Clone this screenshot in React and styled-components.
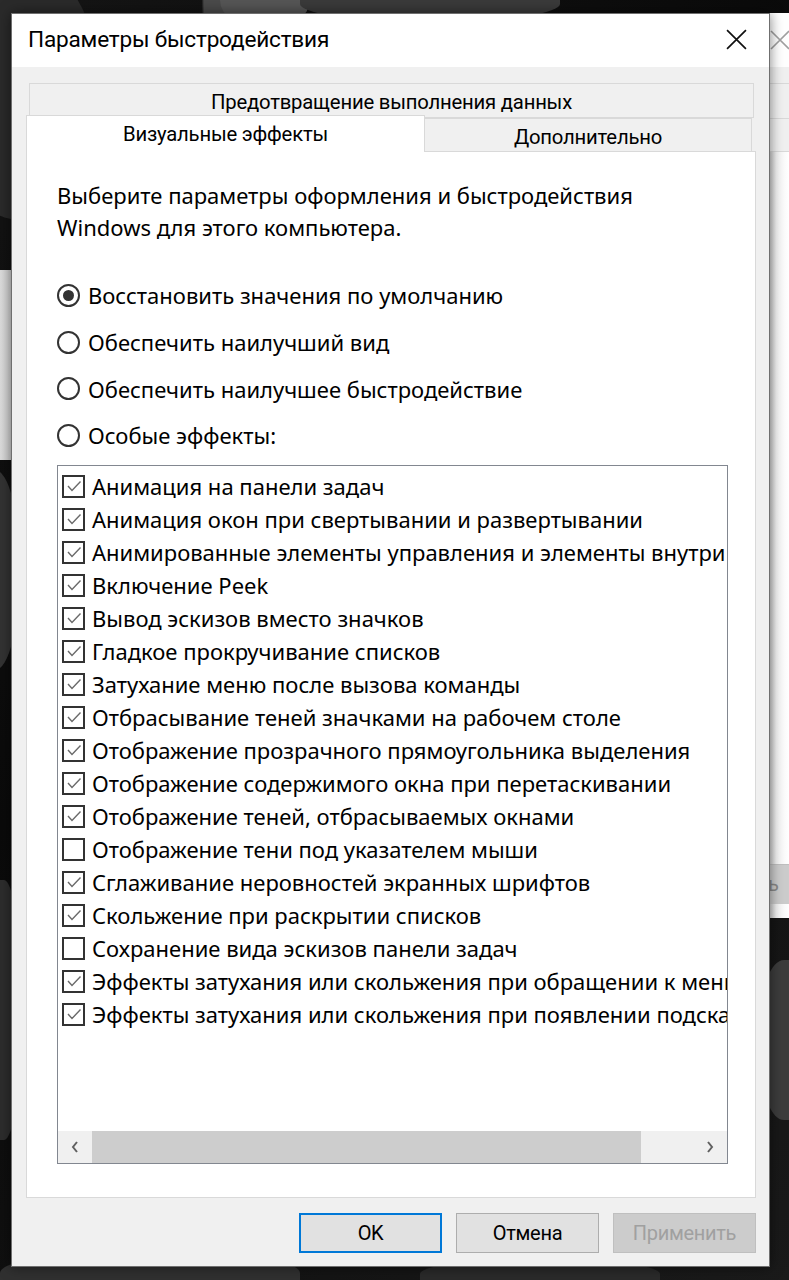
import styled, { createGlobalStyle } from "styled-components";
import { useState } from "react";

const GlobalStyle = createGlobalStyle`
  html, body {
    margin: 0;
    padding: 0;
    width: 789px;
    height: 1280px;
    overflow: hidden;
    background: #0c0c0c;
  }
  * {
    box-sizing: border-box;
  }
`;

const effects = [
  ["Анимация на панели задач", true],
  ["Анимация окон при свертывании и развертывании", true],
  ["Анимированные элементы управления и элементы внутри окна", true],
  ["Включение Peek", true],
  ["Вывод эскизов вместо значков", true],
  ["Гладкое прокручивание списков", true],
  ["Затухание меню после вызова команды", true],
  ["Отбрасывание теней значками на рабочем столе", true],
  ["Отображение прозрачного прямоугольника выделения", true],
  ["Отображение содержимого окна при перетаскивании", true],
  ["Отображение теней, отбрасываемых окнами", true],
  ["Отображение тени под указателем мыши", false],
  ["Сглаживание неровностей экранных шрифтов", true],
  ["Скольжение при раскрытии списков", true],
  ["Сохранение вида эскизов панели задач", false],
  ["Эффекты затухания или скольжения при обращении к меню", true],
  ["Эффекты затухания или скольжения при появлении подсказок", true],
];

const modes = [
  "Восстановить значения по умолчанию",
  "Обеспечить наилучший вид",
  "Обеспечить наилучшее быстродействие",
  "Особые эффекты:",
];

const App = () => {
  const [mode, setMode] = useState(0);
  const [checks, setChecks] = useState(effects.map((e) => e[1]));

  const toggle = (i) =>
    setChecks((prev) => prev.map((v, j) => (j === i ? !v : v)));

  return (
    <Desktop>
      <GlobalStyle />
      <Blob $l={-60} $t={-40} $w={160} $h={260} $c="#2a2a2a" $r="50%" />
      <Blob $l={220} $t={-30} $w={90} $h={60} $c="#555" $r="50%" />
      <Blob $l={300} $t={-20} $w={260} $h={40} $c="#3a3a3a" $r="40%" />
      <Blob $l={-30} $t={470} $w={50} $h={200} $c="#333" $r="50%" />
      <Blob $l={-20} $t={880} $w={40} $h={260} $c="#2d2d2d" $r="40%" />
      <Blob $l={0} $t={1255} $w={300} $h={60} $c="#303030" $r="30%" />
      <Blob $l={420} $t={1262} $w={240} $h={40} $c="#2a2a2a" $r="30%" />
      <Blob $l={760} $t={960} $w={60} $h={160} $c="#3c3c3c" $r="40%" />

      <SideWindow>
        <SideTitle>
          <XIcon size={20} color="#a0a0a0" />
        </SideTitle>
        <SideBody>
          <SideTabs />
          <SidePanel>
            <SideButton>ь</SideButton>
          </SidePanel>
        </SideBody>
      </SideWindow>

      <LeftWindow />

      <Dialog>
        <TitleBar>
          <Title>Параметры быстродействия</Title>
          <CloseButton aria-label="Закрыть">
            <XIcon size={21} color="#111" />
          </CloseButton>
        </TitleBar>

        <Body>
          <Tabs>
            <TabRow $m="0 2px -3px 4px">
              <Tab $grow $h="35px" $pt="3px">
                Предотвращение выполнения данных
              </Tab>
            </TabRow>
            <TabRow $m="0 4px -1px 0">
              <Tab $selected $w="399px" $h="37px">
                Визуальные эффекты
              </Tab>
              <Tab $grow $h="34px" $pt="4px">
                Дополнительно
              </Tab>
            </TabRow>
          </Tabs>

          <Panel>
            <Intro>
              Выберите параметры оформления и быстродействия
              <br />
              Windows для этого компьютера.
            </Intro>

            <RadioGroup>
              {modes.map((label, i) => (
                <RadioRow key={label} onClick={() => setMode(i)}>
                  <Radio $on={mode === i} />
                  <span>{label}</span>
                </RadioRow>
              ))}
            </RadioGroup>

            <ListBox>
              <Items>
                {effects.map(([label], i) => (
                  <Item key={label} onClick={() => toggle(i)}>
                    <CheckBox>
                      {checks[i] && (
                        <svg width="18" height="18" viewBox="0 0 18 18">
                          <polyline
                            points="3,9 7,13.5 15.5,4.5"
                            fill="none"
                            stroke="#6a6a6a"
                            strokeWidth="1.4"
                          />
                        </svg>
                      )}
                    </CheckBox>
                    <ItemText>{label}</ItemText>
                  </Item>
                ))}
              </Items>
              <HScroll>
                <Arrow>
                  <svg width="10" height="14" viewBox="0 0 10 14">
                    <polyline points="7,2 3,7 7,12" fill="none" stroke="#606060" strokeWidth="2" />
                  </svg>
                </Arrow>
                <Track>
                  <Thumb style={{ width: "549px" }} />
                </Track>
                <Arrow>
                  <svg width="10" height="14" viewBox="0 0 10 14">
                    <polyline points="3,2 7,7 3,12" fill="none" stroke="#606060" strokeWidth="2" />
                  </svg>
                </Arrow>
              </HScroll>
            </ListBox>
          </Panel>

          <Footer>
            <Button $primary>OK</Button>
            <Button>Отмена</Button>
            <Button disabled>Применить</Button>
          </Footer>
        </Body>
      </Dialog>
    </Desktop>
  );
};

export default App;

const XIcon = ({ size, color }) => (
  <svg width={size} height={size} viewBox="0 0 20 20">
    <path d="M1 1 L19 19 M19 1 L1 19" stroke={color} strokeWidth="1.6" fill="none" />
  </svg>
);

const uiFont = `"Noto Sans", "Open Sans", sans-serif`;
const narrowFont = `Roboto, "Liberation Sans", sans-serif`;

const Desktop = styled.div`
  position: relative;
  width: 789px;
  height: 1280px;
  overflow: hidden;
  background:
    radial-gradient(ellipse 120px 300px at 240px 0px, #4a4a4a 0%, #4a4a4a 30%, transparent 32%),
    linear-gradient(135deg, #151515 0%, #0a0a0a 40%, #1a1a1a 100%);
`;

const Blob = styled.div`
  position: absolute;
  left: ${(p) => p.$l}px;
  top: ${(p) => p.$t}px;
  width: ${(p) => p.$w}px;
  height: ${(p) => p.$h}px;
  background: ${(p) => p.$c};
  border-radius: ${(p) => p.$r};
`;

const SideWindow = styled.div`
  position: absolute;
  left: 768px;
  top: 13px;
  width: 300px;
  height: 905px;
  background: #f0f0f0;
  display: flex;
  flex-direction: column;
`;

const SideTitle = styled.div`
  height: 54px;
  background: #fff;
  padding: 17px 0 0 2px;
`;

const SideBody = styled.div`
  flex: 1;
  display: flex;
  flex-direction: column;
  padding-top: 16px;
`;

const SideTabs = styled.div`
  height: 69px;
  border-top: 1px solid #d9d9d9;
  border-bottom: 1px solid #d9d9d9;
  background: linear-gradient(#f0f0f0 0 34px, #d9d9d9 34px 35px, #f0f0f0 35px);
`;

const SidePanel = styled.div`
  flex: 1;
  background: linear-gradient(90deg, #c8c8c8 0, #f2f2f2 8px, #fff 20px);
  display: flex;
  flex-direction: column;
  justify-content: flex-end;
  padding-bottom: 12px;
`;

const SideButton = styled.div`
  height: 40px;
  margin-bottom: 2px;
  background: #cccccc;
  border-top: 1px solid #bfbfbf;
  color: #8a8a8a;
  font: 20px ${uiFont};
  line-height: 38px;
`;

const LeftWindow = styled.div`
  position: absolute;
  left: -10px;
  top: 270px;
  width: 22px;
  height: 190px;
  background: linear-gradient(90deg, #e8e8e8, #d0d0d0);
`;

const Dialog = styled.div`
  position: absolute;
  left: 11px;
  top: 13px;
  width: 759px;
  height: 1254px;
  border: 1px solid #6f6f6f;
  background: #f0f0f0;
  display: flex;
  flex-direction: column;
  box-shadow: 0 0 12px rgba(0, 0, 0, 0.5);
`;

const TitleBar = styled.div`
  height: 53px;
  background: #fff;
  display: flex;
  align-items: center;
  justify-content: space-between;
  padding: 0 0 2px 16px;
`;

const Title = styled.div`
  font-family: ${narrowFont};
  font-size: 22.6px;
  color: #000;
  letter-spacing: -0.2px;
`;

const CloseButton = styled.button`
  width: 66px;
  height: 53px;
  border: none;
  background: transparent;
  display: flex;
  align-items: center;
  justify-content: center;
  padding: 0;
  cursor: pointer;
`;

const Body = styled.div`
  flex: 1;
  display: flex;
  flex-direction: column;
  padding: 16px 13px 13px 14px;
`;

const Tabs = styled.div`
  display: flex;
  flex-direction: column;
`;

const TabRow = styled.div`
  display: flex;
  align-items: flex-end;
  margin: ${(p) => p.$m};
`;

const Tab = styled.div`
  ${(p) => (p.$grow ? "flex: 1;" : `width: ${p.$w};`)}
  height: ${(p) => p.$h};
  background: ${(p) => (p.$selected ? "#fff" : "#f0f0f0")};
  border: 1px solid #d9d9d9;
  border-bottom: ${(p) => (p.$selected ? "none" : "1px solid #d9d9d9")};
  margin-left: ${(p) => (p.$selected ? "0" : "-1px")};
  position: relative;
  z-index: ${(p) => (p.$selected ? 2 : 1)};
  display: flex;
  align-items: center;
  justify-content: center;
  padding-top: ${(p) => p.$pt || "0"};
  font-family: ${narrowFont};
  font-size: 20.3px;
  color: #000;
  letter-spacing: -0.2px;
`;

const Panel = styled.div`
  flex: 1;
  background: #fff;
  border: 1px solid #d9d9d9;
  padding: 27px 27px 33px 30px;
  display: flex;
  flex-direction: column;
  font-family: ${uiFont};
  color: #000;
`;

const Intro = styled.div`
  font-size: 22px;
  line-height: 32px;
  margin-bottom: 29px;
`;

const RadioGroup = styled.div`
  display: flex;
  flex-direction: column;
  margin-bottom: 6px;
`;

const RadioRow = styled.label`
  display: flex;
  align-items: center;
  gap: 8px;
  height: 46.7px;
  font-size: 22px;
  cursor: pointer;
`;

const Radio = styled.span`
  width: 23px;
  height: 23px;
  border-radius: 50%;
  border: 2px solid #333;
  display: flex;
  align-items: center;
  justify-content: center;
  flex-shrink: 0;

  &::after {
    content: "";
    width: 11px;
    height: 11px;
    border-radius: 50%;
    background: #333;
    display: ${(p) => (p.$on ? "block" : "none")};
  }
`;

const ListBox = styled.div`
  flex: 1;
  border: 1px solid #828790;
  display: flex;
  flex-direction: column;
  overflow: hidden;
`;

const Items = styled.div`
  flex: 1;
  padding: 4px 0 0 4px;
  overflow: hidden;
`;

const Item = styled.div`
  display: flex;
  align-items: center;
  gap: 7px;
  height: 33px;
  white-space: nowrap;
  cursor: default;
`;

const CheckBox = styled.span`
  width: 23px;
  height: 23px;
  border: 2px solid #333;
  flex-shrink: 0;
  display: flex;
  align-items: center;
  justify-content: center;
`;

const ItemText = styled.span`
  font-size: 22px;
`;

const HScroll = styled.div`
  height: 32px;
  display: flex;
  background: #f0f0f0;
`;

const Arrow = styled.div`
  width: 34px;
  display: flex;
  align-items: center;
  justify-content: center;
`;

const Track = styled.div`
  flex: 1;
  display: flex;
`;

const Thumb = styled.div`
  height: 100%;
  background: #cdcdcd;
`;

const Footer = styled.div`
  display: flex;
  justify-content: flex-end;
  gap: 14px;
  padding-top: 15px;
`;

const Button = styled.button`
  width: 143px;
  height: 40px;
  font-family: ${narrowFont};
  font-size: 20px;
  letter-spacing: -0.3px;
  color: #000;
  background: #e1e1e1;
  border: ${(p) => (p.$primary ? "2px solid #0078d7" : "1px solid #adadad")};
  cursor: pointer;

  &:disabled {
    background: #cccccc;
    border-color: #bfbfbf;
    color: #a0a0a0;
    cursor: default;
  }
`;
